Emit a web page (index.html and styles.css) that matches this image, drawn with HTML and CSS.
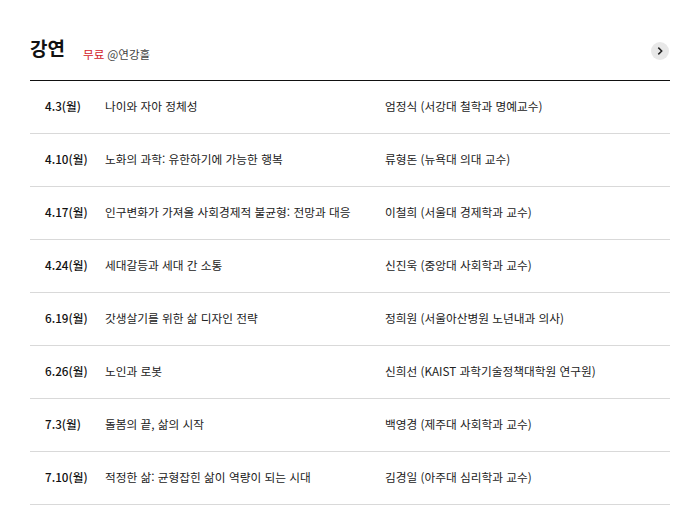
FILE: index.html
```html
<!DOCTYPE html>
<html lang="ko">
<head>
<meta charset="utf-8">
<link rel="stylesheet" href="styles.css">
</head>
<body>
<section class="lectures">
  <header class="head">
    <h2 class="title">강연</h2>
    <span class="free">무료</span>
    <span class="place">@연강홀</span>
    <span class="more"><svg width="18" height="18" viewBox="0 0 18 18"><circle cx="9" cy="9" r="9" fill="#e8e8e8"/><path d="M7.3 5.6 L10.7 9 L7.3 12.4" fill="none" stroke="#222" stroke-width="1.5"/></svg></span>
  </header>
  <ul class="list">
    <li class="row"><span class="date">4.3(월)</span><span class="topic">나이와 자아 정체성</span><span class="speaker">엄정식 (서강대 철학과 명예교수)</span></li>
    <li class="row"><span class="date">4.10(월)</span><span class="topic">노화의 과학: 유한하기에 가능한 행복</span><span class="speaker">류형돈 (뉴욕대 의대 교수)</span></li>
    <li class="row"><span class="date">4.17(월)</span><span class="topic">인구변화가 가져올 사회경제적 불균형: 전망과 대응</span><span class="speaker">이철희 (서울대 경제학과 교수)</span></li>
    <li class="row"><span class="date">4.24(월)</span><span class="topic">세대갈등과 세대 간 소통</span><span class="speaker">신진욱 (중앙대 사회학과 교수)</span></li>
    <li class="row"><span class="date">6.19(월)</span><span class="topic">갓생살기를 위한 삶 디자인 전략</span><span class="speaker">정희원 (서울아산병원 노년내과 의사)</span></li>
    <li class="row"><span class="date">6.26(월)</span><span class="topic">노인과 로봇</span><span class="speaker">신희선 (KAIST 과학기술정책대학원 연구원)</span></li>
    <li class="row"><span class="date">7.3(월)</span><span class="topic">돌봄의 끝, 삶의 시작</span><span class="speaker">백영경 (제주대 사회학과 교수)</span></li>
    <li class="row"><span class="date">7.10(월)</span><span class="topic">적정한 삶: 균형잡힌 삶이 역량이 되는 시대</span><span class="speaker">김경일 (아주대 심리학과 교수)</span></li>
  </ul>
</section>
</body>
</html>
```
FILE: styles.css
```css
html, body { margin: 0; padding: 0; background: #fff; }
body {
  font-family: "Noto Sans CJK KR", "Noto Sans", sans-serif;
  color: #222;
}
.lectures { margin: 0 30px; padding-top: 34px; }
.head {
  display: flex;
  align-items: center;
  height: 32px;
  padding-bottom: 14px;
  border-bottom: 1px solid #111;
}
.title {
  margin: -4px 0 0;
  font-size: 19px;
  font-weight: 700;
  line-height: 32px;
  color: #111;
}
.free {
  margin-left: 18px;
  margin-top: 8px;
  font-size: 11.6px;
  color: #d2232a;
}
.place {
  margin-left: 3px;
  margin-top: 8px;
  font-size: 11.6px;
  color: #444;
}
.more { margin-left: auto; margin-right: 1px; display: flex; margin-top: 1px; }
.list { list-style: none; margin: 0; padding: 0; }
.row {
  display: flex;
  align-items: center;
  height: 52px;
  box-sizing: border-box;
  height: 53px;
  padding-bottom: 4px;
  border-bottom: 1px solid #d9d9d9;
  font-size: 11.7px;
}
.date { width: 60px; padding-left: 15px; font-weight: 500; color: #111; }
.topic { width: 280px; }
.speaker { flex: 1; }
```
